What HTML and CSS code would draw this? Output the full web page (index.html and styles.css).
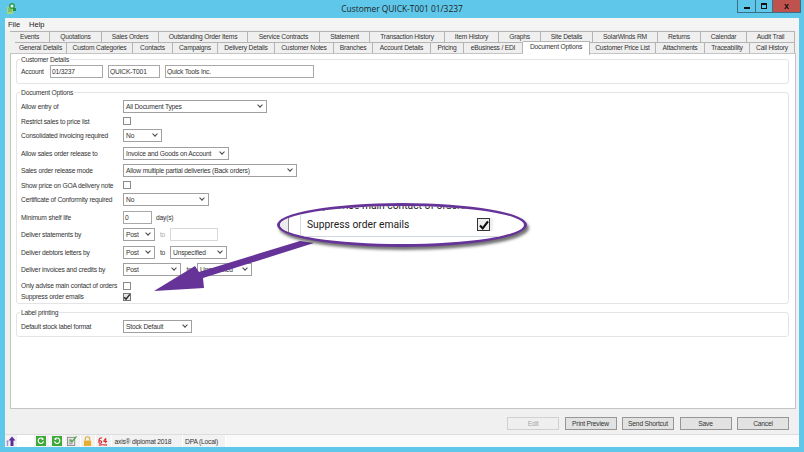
FILE: index.html
```html
<!DOCTYPE html>
<html lang="en">
<head>
  <meta charset="UTF-8">
  <meta name="viewport" content="width=device-width, initial-scale=1.0">
  <title>Customer QUICK-T001 01/3237</title>
  <link rel="stylesheet" href="styles.css">
</head>
<body>

<div class="window">
  <!-- Title bar -->
  <div class="titlebar">
    <svg class="app-icon" width="10" height="11" viewBox="0 0 10 11">
      <rect x="0" y="4" width="6" height="7" fill="#a6d67e"/>
      <path d="M1 6 H5 M1 8 H5" stroke="#5fa84a"/>
      <circle cx="5" cy="3" r="3" fill="#2f9e4f"/>
      <circle cx="5" cy="3" r="1.5" fill="#f2fff0"/>
      <rect x="6" y="5" width="3" height="3" fill="#1f8f45"/>
    </svg>
    <div class="title">Customer QUICK-T001 01/3237</div>
    <div class="win-buttons">
      <div class="win-btn"><span class="min-glyph"></span></div>
      <div class="win-btn win-btn-max"><span class="max-glyph"></span></div>
      <div class="win-btn win-close">x</div>
    </div>
  </div>

  <div class="client">
    <div class="menu">
      <span>File</span>
      <span>Help</span>
    </div>

    <div class="tabs tabs-top">
      <div class="tab">Events</div>
      <div class="tab">Quotations</div>
      <div class="tab">Sales Orders</div>
      <div class="tab">Outstanding Order Items</div>
      <div class="tab">Service Contracts</div>
      <div class="tab">Statement</div>
      <div class="tab">Transaction History</div>
      <div class="tab">Item History</div>
      <div class="tab">Graphs</div>
      <div class="tab">Site Details</div>
      <div class="tab">SolarWinds RM</div>
      <div class="tab">Returns</div>
      <div class="tab">Calendar</div>
      <div class="tab">Audit Trail</div>
    </div>
    <div class="tabs tabs-bottom">
      <div class="tab">General Details</div>
      <div class="tab">Custom Categories</div>
      <div class="tab">Contacts</div>
      <div class="tab">Campaigns</div>
      <div class="tab">Delivery Details</div>
      <div class="tab">Customer Notes</div>
      <div class="tab">Branches</div>
      <div class="tab">Account Details</div>
      <div class="tab">Pricing</div>
      <div class="tab">eBusiness / EDI</div>
      <div class="tab tab-active">Document Options</div>
      <div class="tab">Customer Price List</div>
      <div class="tab">Attachments</div>
      <div class="tab">Traceability</div>
      <div class="tab">Call History</div>
    </div>

    <div class="panel">
      <div class="group group-customer">
        <div class="group-title">Customer Details</div>
        <div class="row">
          <label class="account-label">Account</label>
          <input class="field w-account" value="01/3237">
          <input class="field w-code" value="QUICK-T001">
          <input class="field w-name" value="Quick Tools Inc.">
        </div>
      </div>

      <div class="group group-options">
        <div class="group-title">Document Options</div>
        <div class="row">
          <label>Allow entry of</label>
          <div class="select w-144">All Document Types</div>
        </div>
        <div class="row gap-1">
          <label>Restrict sales to price list</label>
          <span class="check"></span>
        </div>
        <div class="row">
          <label>Consolidated invoicing required</label>
          <div class="select w-39">No</div>
        </div>
        <div class="row gap-4">
          <label>Allow sales order release to</label>
          <div class="select w-106">Invoice and Goods on Account</div>
        </div>
        <div class="row gap-3">
          <label>Sales order release mode</label>
          <div class="select w-174">Allow multiple partial deliveries (Back orders)</div>
        </div>
        <div class="row gap-1">
          <label>Show price on GOA delivery note</label>
          <span class="check"></span>
        </div>
        <div class="row">
          <label>Certificate of Conformity required</label>
          <div class="select w-86">No</div>
        </div>
        <div class="row gap-4">
          <label>Minimum shelf life</label>
          <input class="field w-29" value="0">
          <span class="unit">day(s)</span>
        </div>
        <div class="row gap-3">
          <label>Deliver statements by</label>
          <div class="select w-32">Post</div>
          <span class="to to-off">to</span>
          <input class="field field-off w-48">
        </div>
        <div class="row gap-4">
          <label>Deliver debtors letters by</label>
          <div class="select w-32">Post</div>
          <span class="to">to</span>
          <div class="select w-57">Unspecified</div>
        </div>
        <div class="row gap-3">
          <label>Deliver invoices and credits by</label>
          <div class="select w-58">Post</div>
          <span class="to to-wide">to</span>
          <div class="select w-55">Unspecified</div>
        </div>
        <div class="row row-short gap-4">
          <label>Only advise main contact of orders</label>
          <span class="check"></span>
        </div>
        <div class="row row-short">
          <label>Suppress order emails</label>
          <span class="check check-on">
            <svg width="8" height="8" viewBox="0 0 8 8"><path d="M1.2 4.2 L3 6.2 L6.8 1.4" fill="none" stroke="#222" stroke-width="1.4"/></svg>
          </span>
        </div>
      </div>

      <div class="group group-label">
        <div class="group-title">Label printing</div>
        <div class="row">
          <label>Default stock label format</label>
          <div class="select w-69">Stock Default</div>
        </div>
      </div>
    </div>

    <div class="actions">
      <button class="btn btn-off">Edit</button>
      <button class="btn">Print Preview</button>
      <button class="btn">Send Shortcut</button>
      <button class="btn">Save</button>
      <button class="btn">Cancel</button>
    </div>

    <div class="statusbar">
      <div class="cell cell-arrows">
        <svg width="10" height="10" viewBox="0 0 10 10">
          <path d="M0 6 L1.5 4 L3 6 H2.2 V10 H0.8 V6 Z" fill="#a98fce"/>
          <path d="M2.5 4.5 L6 0.5 L9.5 4.5 H7.5 V10 H4.5 V4.5 Z" fill="#5d2f9a"/>
        </svg>
      </div>
      <div class="cell cell-blank"></div>
      <div class="cell cell-icon">
        <svg width="10" height="10" viewBox="0 0 11 11">
          <rect width="11" height="11" fill="#3ea83a"/>
          <path d="M7.8 3.4 A3 3 0 1 0 8.3 6" fill="none" stroke="#fff" stroke-width="1.3"/>
          <path d="M6.4 1.6 L8.8 3.6 L6.2 4.6 Z" fill="#fff"/>
        </svg>
      </div>
      <div class="cell cell-icon">
        <svg width="10" height="10" viewBox="0 0 11 11">
          <rect width="11" height="11" fill="#3ea83a"/>
          <path d="M3.2 3.4 A3 3 0 1 1 2.7 6" fill="none" stroke="#fff" stroke-width="1.3"/>
          <path d="M4.6 1.6 L2.2 3.6 L4.8 4.6 Z" fill="#fff"/>
        </svg>
      </div>
      <div class="cell cell-icon">
        <svg width="10" height="10" viewBox="0 0 11 11">
          <rect x="0.5" y="1.5" width="8" height="9" fill="#e8e8e8" stroke="#8a8a8a"/>
          <path d="M2 4.5 H6 M2 6.5 H6 M2 8.5 H6" stroke="#8a8a8a"/>
          <path d="M3.5 4 L5.5 6.5 L10.5 0.5" fill="none" stroke="#3ea83a" stroke-width="1.3"/>
        </svg>
      </div>
      <div class="cell cell-icon">
        <svg width="9" height="10" viewBox="0 0 10 11">
          <path d="M2.5 5 V3.2 A2.5 2.5 0 0 1 7.5 3.2 V5" fill="none" stroke="#e2a92e" stroke-width="1.2"/>
          <rect x="1" y="5" width="8" height="6" fill="#e8ae2f"/>
        </svg>
      </div>
      <div class="cell cell-icon">
        <svg width="10" height="10" viewBox="0 0 11 11">
          <path d="M1 5 C1 2.5 3 2 4.5 2 M1 5 V7 C1 8.5 4 8.5 4 6.5 C4 5 1.5 5 1 6 M6 6 H10 M8.5 2.5 L6 6 M8.5 2.5 V8 M1 10 C4 9.6 7 9.6 10 10" fill="none" stroke="#dd2a2a" stroke-width="1.2"/>
        </svg>
      </div>
      <div class="cell cell-text cell-product">axis® diplomat 2018</div>
      <div class="cell cell-text cell-db">DPA (Local)</div>
      <div class="cell cell-rest"></div>
    </div>
  </div>

  <!-- Highlight callout -->
  <svg class="arrow" width="804" height="452" viewBox="0 0 804 452">
    <polygon points="154,291 195,266 199,272 300,241 314,243 203,278 204,288" fill="#663399"/>
  </svg>
  <div class="callout">
    <div class="callout-side"></div>
    <div class="callout-box"></div>
    <div class="callout-line">Only advise main contact of orders</div>
    <div class="callout-top-check"></div>
    <div class="callout-row">
      <span>Suppress order emails</span>
      <span class="callout-check">
        <svg width="12" height="12" viewBox="0 0 12 12"><path d="M2 6.5 L4.7 9.4 L10 2.4" fill="none" stroke="#111" stroke-width="2.2"/></svg>
      </span>
    </div>
  </div>
</div>

</body>
</html>
```

FILE: styles.css
```css
/* Window frame */
body {
  margin: 0;
  padding: 0;
  background-color: #5fc8ea;
  font-family: 'Liberation Sans', Arial, sans-serif;
  font-size: 6.7px;
  letter-spacing: -0.2px;
  color: #333;
}
.window {
  position: relative;
  width: 804px;
  height: 452px;
  overflow: hidden;
}
.titlebar {
  position: relative;
  height: 18px;
}
.app-icon {
  position: absolute;
  left: 7px;
  top: 3px;
}
.title {
  text-align: center;
  font-family: 'Open Sans', 'Liberation Sans', sans-serif;
  font-size: 8.4px;
  letter-spacing: 0;
  line-height: 18px;
  color: #222;
}
.win-buttons {
  position: absolute;
  top: 0;
  right: 3px;
  display: flex;
  height: 12px;
  border: 1px solid #3a6f86;
  border-top: none;
}
.win-btn {
  position: relative;
  width: 17px;
  background-color: #5fc8ea;
  border-right: 1px solid #3a6f86;
  display: flex;
  align-items: center;
  justify-content: center;
}
.win-btn-max {
  width: 16px;
}
.min-glyph {
  width: 6px;
  height: 2px;
  margin-top: 3px;
  background-color: #111;
}
.max-glyph {
  width: 4px;
  height: 3px;
  border: 1px solid #111;
  border-top-width: 2px;
}
.win-close {
  width: 27px;
  border-right: none;
  background-color: #c0524e;
  color: #111;
  font-weight: bold;
  font-size: 9px;
}

/* Client area */
.client {
  margin: 0 5px;
  height: 429px;
  background-color: #f0f0f0;
  display: flex;
  flex-direction: column;
}
.menu {
  flex-shrink: 0;
  height: 12px;
  padding-left: 3px;
  display: flex;
  gap: 9px;
  align-items: center;
  font-size: 7.5px;
  letter-spacing: 0;
  color: #222;
  background-color: #f4f4f4;
}

/* Tabs */
.tabs {
  flex-shrink: 0;
  display: grid;
  height: 11px;
}
.tabs-top {
  margin: 1px 0 0 5px;
  grid-template-columns: 40px 52px 57px 89px 72px 50px 75px 54px 42px 52px 65px 43px 46px 48px;
}
.tabs-bottom {
  margin-left: 10px;
  grid-template-columns: 52px 66px 40px 45px 57px 59px 39px 58px 33px 59px 67px 66px 49px 45px 45px;
}
.tab {
  border: 1px solid #b4b4b4;
  border-bottom: none;
  border-left: none;
  background-color: #efefef;
  text-align: center;
  line-height: 10px;
  white-space: nowrap;
}
.tab-active {
  background-color: #fff;
  height: 13px;
  margin-top: -1px;
  position: relative;
  line-height: 10px;
}
.panel {
  flex-shrink: 0;
  height: 356px;
  margin: 0 3px 0 5px;
  padding: 5px 5px 0;
  box-sizing: border-box;
  background-color: #fff;
  border: 1px solid #c4c4c4;
}

/* Group boxes */
.group {
  position: relative;
  border: 1px solid #e4e4e4;
  border-radius: 3px;
  padding: 0 4px;
  width: 773px;
  box-sizing: border-box;
}
.group-title {
  position: absolute;
  top: -4px;
  left: 3px;
  padding: 0 1px;
  background-color: #fff;
  line-height: 8px;
}
.group-customer {
  height: 25px;
  padding-top: 4px;
}
.group-options {
  height: 212px;
  margin-top: 8px;
  padding-top: 6px;
}
.group-label {
  height: 25px;
  margin-top: 8px;
  padding-top: 6px;
}

/* Form rows */
.row {
  display: flex;
  align-items: center;
  height: 14px;
}
.row label {
  width: 102px;
  flex-shrink: 0;
  white-space: nowrap;
}
.row .account-label {
  width: 29px;
}
.row-short {
  height: 11px;
}
.gap-1 { margin-top: 1px; }
.gap-3 { margin-top: 3px; }
.gap-4 { margin-top: 4px; }

.field {
  height: 13px;
  box-sizing: border-box;
  border: 1px solid #a8a8a8;
  padding: 0 1px;
  margin: 0;
  font-family: inherit;
  font-size: 6.7px;
  letter-spacing: inherit;
  color: #333;
  background-color: #fff;
  outline: none;
}
.field-off {
  border-color: #d8d8d8;
}
.w-account { width: 53px; margin-right: 5px; }
.w-code { width: 52px; margin-right: 5px; }
.w-name { width: 149px; }
.w-29 { width: 29px; }
.w-48 { width: 48px; }

.select {
  position: relative;
  height: 13px;
  box-sizing: border-box;
  border: 1px solid #a0a0a0;
  padding-left: 2px;
  line-height: 11px;
  white-space: nowrap;
  background-color: #fff;
}
.select::after {
  content: "";
  position: absolute;
  right: 4px;
  top: 2px;
  width: 3px;
  height: 3px;
  border-right: 1px solid #444;
  border-bottom: 1px solid #444;
  transform: rotate(45deg);
}
.w-144 { width: 144px; }
.w-39 { width: 39px; }
.w-106 { width: 106px; }
.w-174 { width: 174px; }
.w-86 { width: 86px; }
.w-32 { width: 32px; }
.w-57 { width: 57px; }
.w-58 { width: 58px; }
.w-55 { width: 55px; }
.w-69 { width: 69px; }

.unit {
  margin-left: 4px;
}
.to {
  width: 15px;
  text-align: center;
}
.to-off {
  color: #aaa;
}
.to-wide {
  width: 16px;
}
.check {
  width: 8px;
  height: 8px;
  box-sizing: border-box;
  border: 1px solid #8a8a8a;
  background-color: #fff;
  display: flex;
  align-items: center;
  justify-content: center;
}
.check-on {
  background-color: #e6e6e6;
  border-color: #777;
}
.check-on svg {
  flex-shrink: 0;
}

/* Bottom buttons */
.actions {
  flex-shrink: 0;
  display: flex;
  justify-content: flex-end;
  gap: 5.5px;
  padding: 8px 10px 0 0;
  height: 25px;
  box-sizing: border-box;
}
.btn {
  width: 52px;
  height: 13px;
  padding: 0;
  border: 1px solid #969696;
  background-color: #e2e2e2;
  font-family: inherit;
  font-size: 6.7px;
  letter-spacing: inherit;
  color: #333;
}
.btn-off {
  border-color: #d0d0d0;
  background-color: #efefef;
  color: #a8a8a8;
}

/* Status bar */
.statusbar {
  flex: 1;
  display: flex;
  background-color: #fff;
  border-top: 1px solid #ddd;
  align-items: stretch;
}
.cell {
  display: flex;
  align-items: center;
  justify-content: center;
  box-sizing: border-box;
  background-color: #f2f2f2;
  border-right: 1px solid #fff;
}
.cell-text {
  justify-content: flex-start;
  white-space: nowrap;
}
.cell-arrows { width: 13px; }
.cell-blank { width: 16px; background-color: #fff; }
.cell-icon { width: 15.5px; }
.cell-product { width: 71.5px; padding-left: 3px; }
.cell-db { width: 43px; padding-left: 2px; }
.cell-rest { flex: 1; background-color: #fafafa; }

/* Callout over the form */
.arrow {
  position: absolute;
  left: 0;
  top: 0;
}
.callout {
  position: absolute;
  left: 277px;
  top: 203px;
  width: 250px;
  height: 44px;
  box-sizing: border-box;
  border: 3px solid #663399;
  border-radius: 50%;
  background-color: #fff;
  overflow: hidden;
  box-shadow: 2px 3px 3px rgba(0, 0, 0, 0.55);
  font-family: Roboto, 'Liberation Sans', sans-serif;
  letter-spacing: 0;
  color: #222;
}
.callout-side {
  position: absolute;
  left: 0;
  top: 0;
  width: 8px;
  height: 100%;
  background-color: #ececec;
  border-right: 1px solid #8a8a8a;
}
.callout-box {
  position: absolute;
  left: 20px;
  top: -10px;
  width: 300px;
  height: 40px;
  border-left: 1px solid #d4dde2;
  border-bottom: 1px solid #cfd8dc;
  border-bottom-left-radius: 3px;
}
.callout-line {
  position: absolute;
  left: 27px;
  top: -7px;
  font-size: 10.3px;
  white-space: nowrap;
}
.callout-top-check {
  position: absolute;
  left: 200px;
  top: -9px;
  width: 13px;
  height: 13px;
  box-sizing: border-box;
  border: 1px solid #888;
}
.callout-row {
  position: absolute;
  left: 27px;
  top: 12px;
  width: 183px;
  display: flex;
  justify-content: space-between;
  align-items: center;
  font-size: 10.3px;
}
.callout-check {
  width: 13px;
  height: 13px;
  box-sizing: border-box;
  border: 1px solid #333;
  display: flex;
  align-items: center;
  justify-content: center;
  background-color: #eee;
  box-shadow: 3px 0 0 #f0f0f0;
}
.callout-check svg {
  flex-shrink: 0;
}
```
